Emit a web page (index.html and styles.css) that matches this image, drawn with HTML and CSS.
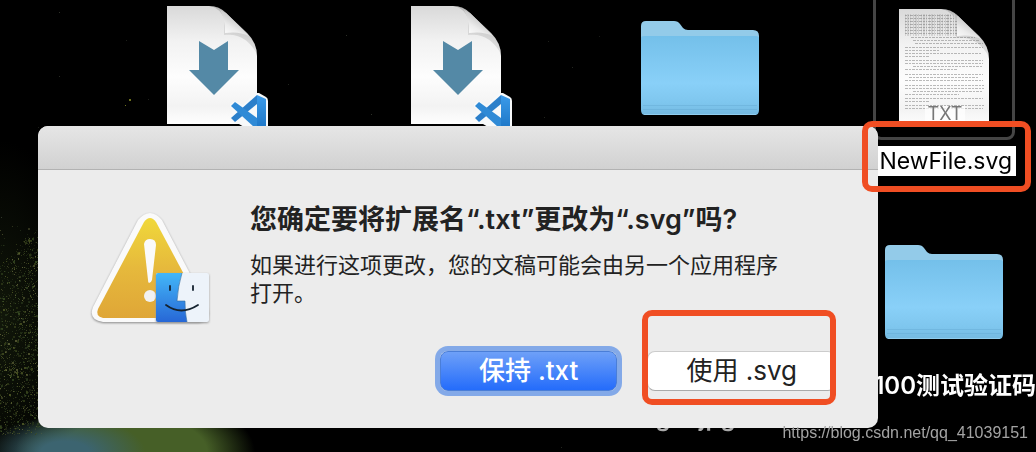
FILE: index.html
```html
<!DOCTYPE html>
<html lang="zh-CN">
<head>
  <meta charset="UTF-8" />
  <title>NewFile.svg</title>
  <link rel="stylesheet" href="styles.css">
</head>
<body>

  <!-- shared icon shapes -->
  <svg class="defs" width="0" height="0" aria-hidden="true">
    <defs>
      <linearGradient id="paper" x1="0" y1="0" x2="0" y2="1">
        <stop offset="0" stop-color="#d9d9d9" />
        <stop offset="0.3" stop-color="#f2f2f2" />
        <stop offset="0.6" stop-color="#fdfdfd" />
        <stop offset="0.85" stop-color="#f3f3f3" />
        <stop offset="1" stop-color="#fefefe" />
      </linearGradient>
      <linearGradient id="curl" x1="0.1" y1="1" x2="0.6" y2="0.3">
        <stop offset="0" stop-color="#ffffff" />
        <stop offset="0.5" stop-color="#ececec" />
        <stop offset="1" stop-color="#c4c4c4" />
      </linearGradient>
      <linearGradient id="curl-shade" x1="0" y1="1" x2="0.5" y2="0">
        <stop offset="0" stop-color="#999" stop-opacity="0" />
        <stop offset="1" stop-color="#888" stop-opacity="0.5" />
      </linearGradient>
      <linearGradient id="folder-front" x1="0" y1="0" x2="0" y2="1">
        <stop offset="0" stop-color="#74c0ea" />
        <stop offset="0.6" stop-color="#89d0f8" />
        <stop offset="0.85" stop-color="#7ec6ee" />
        <stop offset="1" stop-color="#74b9e0" />
      </linearGradient>
      <linearGradient id="warn" x1="0" y1="0" x2="0" y2="1">
        <stop offset="0" stop-color="#f0d83a" />
        <stop offset="0.5" stop-color="#e6b93c" />
        <stop offset="1" stop-color="#dfa637" />
      </linearGradient>
      <linearGradient id="finder" x1="0" y1="0" x2="0" y2="1">
        <stop offset="0" stop-color="#43b7f8" />
        <stop offset="1" stop-color="#2767d6" />
      </linearGradient>
      <linearGradient id="code" x1="0" y1="0" x2="0" y2="1">
        <stop offset="0" stop-color="#3b9bea" />
        <stop offset="1" stop-color="#1f78c8" />
      </linearGradient>

      <symbol id="page" viewBox="0 0 90 118">
        <path fill="url(#paper)" d="M0 0H42Q52 0 59 7L80 27Q90 37 90 50V118H0Z" />
        <path fill="url(#curl-shade)" d="M44 0Q53 3 57 12V29Q78 26 90 48Q89 35 80 27L59 7Q52 0 44 0Z" />
        <path fill="url(#curl)" d="M53 4Q58 12 58 27Q72 25 82 30L59 7Z" />
      </symbol>

      <symbol id="folder" viewBox="0 0 118 94">
        <path fill="#93cbe9" d="M0 5Q0 0 5 0H33Q37 0 39 3L42 7Q44 9 47 9H112Q118 9 118 15V88H0Z" />
        <path fill="url(#folder-front)" d="M0 17Q0 15 3 15H115Q118 15 118 17V89Q118 94 114 94H4Q0 94 0 89Z" />
        <path stroke="#67add6" stroke-width="1" d="M2 84.500H116M2 88.500H116" opacity="0.5" />
        <path stroke="#a5dcfa" stroke-width="1" d="M3 93.500H115" opacity="0.6" />
      </symbol>

      <symbol id="vscode" viewBox="0 0 38 34">
        <path fill="#f7f9fa" d="M25 0Q27 -1 29 0L36 4Q38 5 38 8V34H14L9 31L4 30L0 26V22L4 18L0 14V11L5 8L13 12Z" />
        <path fill="#2b7fca" d="M1 25L27 2V11L5 29Z" />
        <path fill="#2f8ad6" d="M1 13L5 9L27 25V34H24Z" />
        <path fill="url(#code)" d="M27 2L36 6V34H27Z" />
      </symbol>
    </defs>
  </svg>

  <main class="desktop">
    <canvas class="stars" id="stars"></canvas>

    <div class="item item-doc-1">
      <svg class="doc" aria-hidden="true">
        <use href="#page" width="90" height="118" />
        <path fill="#5489a6" d="M32 35L47 44L61 35V64H72L47 89L22 64H32Z" />
        <use href="#vscode" x="63" y="87" width="38" height="34" />
      </svg>
    </div>

    <div class="item item-doc-2">
      <svg class="doc" aria-hidden="true">
        <use href="#page" width="90" height="118" />
        <path fill="#5489a6" d="M32 35L47 44L61 35V64H72L47 89L22 64H32Z" />
        <use href="#vscode" x="63" y="87" width="38" height="34" />
      </svg>
    </div>

    <div class="item item-folder-1">
      <svg class="folder" aria-hidden="true"><use href="#folder" /></svg>
    </div>

    <div class="item item-folder-2">
      <svg class="folder" aria-hidden="true"><use href="#folder" /></svg>
      <span class="name">100测试验证码</span>
    </div>

    <div class="item item-image">
      <span class="name">login.jpg</span>
    </div>

    <div class="item item-txt">
      <div class="selected">
        <svg class="doc" aria-hidden="true">
          <use href="#page" width="90" height="118" />
          <g fill="none" stroke="#777" stroke-width="1">
            <path stroke="#999" stroke-width="22" stroke-dasharray="1 1 2 1 1 2" opacity="0.3" d="M6 16H58" />
            <path stroke-dasharray="2 1 1 1 3 1" opacity="0.5" d="M6 6.500H52M6 9.500H56M6 12.500H58M6 15.500H58M6 18.500H58M6 21.500H58M6 24.500H58" />
            <path stroke-dasharray="3 1 2 1" opacity="0.5" d="M12 28.500H76M14 31.500H80M16 34.500H84M6 38.500H84M6 41.500H40M6 44.500H82M6 47.500H30M6 51.500H84M6 54.500H84M14 57.500H84M6 60.500H58M6 65.500H84M10 68.500H80M6 71.500H84M6 76.500H85M6 79.500H85M14 82.500H84M6 85.500H60M6 89.500H84M6 92.500H30M6 96.500H85M6 99.500H84" />
          </g>
          <rect x="26" y="97" width="40" height="21" fill="#fff" opacity="0.7" />
          <text class="ext" x="46" y="111">TXT</text>
        </svg>
      </div>
      <input class="rename" type="text" value="NewFile.svg" aria-label="文件名">
    </div>

    <section class="dialog" role="alertdialog" aria-labelledby="title" aria-describedby="message">
      <div class="titlebar"></div>
      <div class="content">
        <svg class="warning" viewBox="0 0 120 115" aria-hidden="true">
          <path class="edge" d="M47 9Q59 -5 71 9L116 95Q121 109 108 111H12Q-3 109 2 96Z" />
          <path fill="url(#warn)" d="M53 11Q59 3 65 11L111 97Q114 105 107 107H12Q4 105 7 98Z" />
          <path fill="#fafafa" d="M53 33Q54 28 59 28Q65 28 65 34L61 69Q60 72 58 72Q57 72 57 69Z" />
          <circle cx="59" cy="85" r="6" fill="#f1f1f1" />
          <g class="face">
            <rect x="65" y="62" width="53" height="49" rx="2" fill="#edf3fa" />
            <path fill="url(#finder)" d="M67 62H91Q87 75 86 90H94Q94 102 96 111H67Q65 111 65 109V64Q65 62 67 62Z" />
            <path fill="none" stroke="#31699c" stroke-width="0.600" d="M91 62Q87 75 86 90H94Q94 102 96 111" />
            <path fill="none" stroke="#14222f" stroke-width="1.800" stroke-linecap="round" d="M79 75V79M102 75V79M75 94Q90 105 107 94" />
          </g>
        </svg>
        <div class="text">
          <h1 id="title">您确定要将扩展名“.txt”更改为“.svg”吗?</h1>
          <p id="message">如果进行这项更改&#xFF0C;您的文稿可能会由另一个应用程序打开。</p>
          <div class="buttons">
            <button class="btn primary" type="button">保持 .txt</button>
            <div class="marked">
              <button class="btn" type="button">使用 .svg</button>
              <span class="mark mark-button"></span>
            </div>
          </div>
        </div>
      </div>
    </section>

    <span class="mark mark-name"></span>
    <span class="watermark">https://blog.csdn.net/qq_41039151</span>
  </main>

  <script src="stars.js"></script>
</body>
</html>
```

FILE: styles.css
```css
* {
  box-sizing: border-box;
}
body {
  margin: 0;
  background: #000;
  font-family: Inter, "Noto Sans CJK SC", sans-serif;
  color: #222;
}
.defs {
  position: absolute;
}
.desktop {
  position: relative;
  min-height: 100vh;
  overflow: hidden;
  background:
    radial-gradient(ellipse 80px 36px at 65px 100%, #3c6470 30%, transparent),
    radial-gradient(ellipse 120px 60px at 135px 100%, #465f27 60%, transparent),
    radial-gradient(ellipse 80px 180px at 0 320px, #11170a, transparent),
    #000;
}
.stars {
  position: absolute;
  inset: 0;
  width: 100%;
  height: 100%;
}

/* desktop icons */
.item {
  position: absolute;
  display: flex;
  flex-direction: column;
  align-items: center;
}
.item-doc-1 {
  left: 167px;
  top: 6px;
}
.item-doc-2 {
  left: 411px;
  top: 6px;
}
.item-folder-1 {
  left: 641px;
  top: 21px;
}
.item-folder-2 {
  right: 0;
  top: 245px;
  align-items: flex-end;
  gap: 31px;
}
.item-folder-2 .folder {
  margin-right: 33px;
}
.item-image {
  left: 600px;
  top: 402px;
  width: 170px;
}
.item-txt {
  left: 872px;
  top: -14px;
  width: 144px;
  gap: 6px;
}
.doc {
  display: block;
  width: 90px;
  height: 118px;
  overflow: visible;
}
.folder {
  display: block;
  width: 118px;
  height: 94px;
}
.name {
  color: #fff;
  font-size: 24px;
  font-weight: 600;
  line-height: 32px;
  white-space: nowrap;
}
.item-image .name {
  color: #aaa;
}
.selected {
  display: flex;
  justify-content: center;
  width: 142px;
  height: 154px;
  padding-top: 20px;
  border: 3px solid #454545;
  border-radius: 8px;
}
.ext {
  fill: #777;
  font-size: 18px;
  text-anchor: middle;
}
.rename {
  width: 144px;
  height: 30px;
  padding: 0 4px;
  border: 0;
  outline: 0;
  background: #fff;
  color: #000;
  font: inherit;
  font-size: 23px;
  text-align: right;
}

/* dialog */
.dialog {
  position: absolute;
  left: 38px;
  top: 126px;
  width: 840px;
  border-radius: 10px;
  background: #ececec;
}
.titlebar {
  height: 44px;
  border-bottom: 1px solid #b2b2b2;
  border-radius: 10px 10px 0 0;
  background: linear-gradient(#e6e6e6, #d1d1d1);
}
.content {
  display: flex;
  gap: 39px;
  padding: 34px 42px 37px 53px;
}
.warning {
  flex: none;
  width: 120px;
  height: 115px;
  margin-top: 7px;
  overflow: visible;
}
.edge {
  fill: #fafafa;
  filter: drop-shadow(0 1px 1px #888);
}
.face {
  filter: drop-shadow(0 1px 1px #999);
}
.text {
  flex: 1;
}
h1 {
  margin: 0 0 15px;
  font-size: 27px;
  font-weight: 600;
  line-height: 32px;
}
p {
  max-width: 540px;
  margin: 0;
  font-size: 22px;
  line-height: 28px;
}
.buttons {
  display: flex;
  justify-content: flex-end;
  gap: 30px;
  margin-top: 44px;
}
.btn {
  display: block;
  height: 40px;
  padding: 0 38px;
  border: 1px solid #ccc;
  border-bottom-color: #aaa;
  border-radius: 8px;
  background: #fff;
  color: #222;
  font: inherit;
  font-size: 26px;
  line-height: 38px;
  white-space: nowrap;
}
.primary {
  border-color: #4a7ed8;
  background: linear-gradient(#6ea0f8, #246cfb);
  box-shadow: 0 0 0 5px #83a9e8;
  color: #fff;
  font-weight: 500;
}

/* highlight frames */
.mark {
  position: absolute;
  border: 6px solid #f04e23;
  border-radius: 10px;
  pointer-events: none;
}
.marked {
  position: relative;
}
.mark-button {
  inset: -41px 0 -14px -5px;
}
.mark-name {
  left: 862px;
  top: 121px;
  width: 169px;
  height: 71px;
}

.watermark {
  position: absolute;
  right: 8px;
  bottom: 9px;
  color: #a3a3a3;
  font-family: "Liberation Sans", sans-serif;
  font-size: 16px;
  line-height: 20px;
}
```

FILE: stars.js
```js
const canvas = document.getElementById("stars");
const ctx = canvas.getContext("2d");
const colors = ["#59632a", "#39451c", "#6c7040", "#2c3a20", "#3d5226", "#28351a"];

canvas.width = canvas.clientWidth;
canvas.height = canvas.clientHeight;

// small fixed-seed generator so the sky is the same on every load
let seed = 7;
function rand() {
  seed = (seed * 16807) % 2147483647;
  return seed / 2147483647;
}

// dense cloud down the left side
for (let i = 0; i < 1500; i++) {
  const x = rand() * 42;
  const y = 225 + rand() * 210;
  if (y < 265 - x && rand() > 0.1) continue;
  ctx.globalAlpha = 0.2 + rand() * 0.6;
  ctx.fillStyle = colors[Math.floor(rand() * colors.length)];
  const size = rand() > 0.85 ? 2 : 1;
  ctx.fillRect(Math.floor(x), Math.floor(y), size, size);
}

// a few scattered stars
for (let i = 0; i < 40; i++) {
  ctx.globalAlpha = 0.2 + rand() * 0.2;
  ctx.fillStyle = "#77806a";
  ctx.fillRect(Math.floor(rand() * 620), Math.floor(rand() * 450), 1, 1);
}
ctx.globalAlpha = 0.8;
ctx.fillStyle = "#8a8f25";
ctx.fillRect(129, 99, 2, 2);
ctx.fillRect(125, 105, 1, 1);
```
